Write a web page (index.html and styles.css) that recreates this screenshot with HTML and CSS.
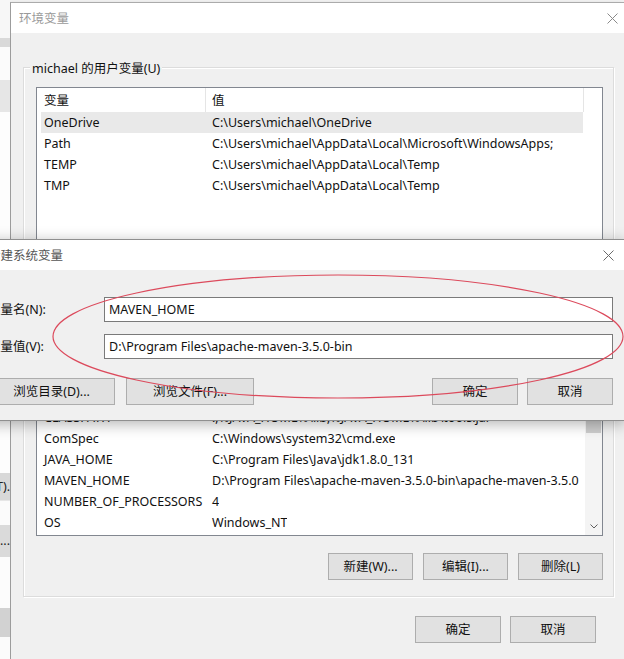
FILE: index.html
```html
<!DOCTYPE html>
<html lang="zh-CN">
<head>
<meta charset="utf-8">
<title>环境变量</title>
<link rel="stylesheet" href="styles.css">
</head>
<body>
<div class="desk">
  <div class="bgwin">
    <div class="band b1"></div>
    <div class="band b2"></div>
    <div class="band b3"></div>
    <div class="band b4"></div>
    <div class="band b5"></div>
    <div class="band b6"><span>(T).</span></div>
    <div class="band b7"></div>
    <div class="band b8"><span>...</span></div>
    <div class="band b9"></div>
    <div class="band b10"></div>
    <div class="band b11"></div>
  </div>

  <div class="dlg main">
    <div class="titlebar">
      <span class="ttl inactive">环境变量</span>
      <svg class="xbtn" width="11" height="11" viewBox="0 0 11 11"><path d="M0.5 0.5L10.5 10.5M10.5 0.5L0.5 10.5" stroke="#8a8a8a" stroke-width="1" fill="none"/></svg>
    </div>
    <div class="body">
      <div class="group">
        <div class="glabel">michael 的用户变量(U)</div>
        <div class="list l1">
          <div class="lcontent">
            <div class="lhead"><div class="hc1">变量</div><div class="hc2">值</div></div>
            <div class="row sel"><div class="rc1">OneDrive</div><div class="rc2">C:\Users\michael\OneDrive</div></div>
            <div class="row"><div class="rc1">Path</div><div class="rc2">C:\Users\michael\AppData\Local\Microsoft\WindowsApps;</div></div>
            <div class="row"><div class="rc1">TEMP</div><div class="rc2">C:\Users\michael\AppData\Local\Temp</div></div>
            <div class="row"><div class="rc1">TMP</div><div class="rc2">C:\Users\michael\AppData\Local\Temp</div></div>
          </div>
        </div>
        <div class="gbtns">
          <button class="btn">新建(N)...</button>
          <button class="btn">编辑(E)...</button>
          <button class="btn">删除(D)</button>
        </div>
      </div>

      <div class="group g2">
        <div class="glabel">系统变量(S)</div>
        <div class="list l2">
          <div class="lcontent">
            <div class="lhead"><div class="hc1">变量</div><div class="hc2">值</div></div>
            <div class="row"><div class="rc1">asl.log</div><div class="rc2">Destination=file</div></div>
            <div class="row"><div class="rc1">CLASSPATH</div><div class="rc2">.;%JAVA_HOME%\lib;%JAVA_HOME%\lib\tools.jar</div></div>
            <div class="row"><div class="rc1">CLASSPATH</div><div class="rc2">.;%JAVA_HOME%\lib;%JAVA_HOME%\lib\tools.jar</div></div>
            <div class="row"><div class="rc1">ComSpec</div><div class="rc2">C:\Windows\system32\cmd.exe</div></div>
            <div class="row"><div class="rc1">JAVA_HOME</div><div class="rc2">C:\Program Files\Java\jdk1.8.0_131</div></div>
            <div class="row"><div class="rc1">MAVEN_HOME</div><div class="rc2">D:\Program Files\apache-maven-3.5.0-bin\apache-maven-3.5.0</div></div>
            <div class="row"><div class="rc1">NUMBER_OF_PROCESSORS</div><div class="rc2">4</div></div>
            <div class="row"><div class="rc1">OS</div><div class="rc2">Windows_NT</div></div>
          </div>
          <div class="sb">
            <div class="sbarrow"></div>
            <div class="sbthumb"></div>
            <div class="sbtrack"></div>
            <div class="sbarrow down"><svg width="8" height="5" viewBox="0 0 8 5"><path d="M0.5 0.5L4 4L7.5 0.5" stroke="#606060" stroke-width="1" fill="none"/></svg></div>
          </div>
        </div>
        <div class="gbtns">
          <button class="btn">新建(W)...</button>
          <button class="btn">编辑(I)...</button>
          <button class="btn">删除(L)</button>
        </div>
      </div>

      <div class="footer">
        <button class="btn wide">确定</button>
        <button class="btn wide">取消</button>
      </div>
    </div>
  </div>
</div>

<div class="dlg ov">
  <div class="titlebar">
    <span class="ttl">新建系统变量</span>
    <svg class="xbtn" width="11" height="11" viewBox="0 0 11 11"><path d="M0.5 0.5L10.5 10.5M10.5 0.5L0.5 10.5" stroke="#6a6a6a" stroke-width="1" fill="none"/></svg>
  </div>
  <div class="ov-body">
    <div class="field"><label class="flabel">变量名(N):</label><div class="input">MAVEN_HOME</div></div>
    <div class="field f2"><label class="flabel">变量值(V):</label><div class="input">D:\Program Files\apache-maven-3.5.0-bin</div></div>
    <div class="ov-btns">
      <button class="btn browse1">浏览目录(D)...</button>
      <button class="btn browse2">浏览文件(F)...</button>
      <div class="ov-right">
        <button class="btn wide">确定</button>
        <button class="btn wide">取消</button>
      </div>
    </div>
  </div>
</div>

<svg class="mark" width="624" height="659" viewBox="0 0 624 659">
  <ellipse cx="338" cy="336.5" rx="285" ry="61.5" fill="none" stroke="#dc4a5c" stroke-width="1.2"/>
</svg>
</body>
</html>
```

FILE: styles.css
```css
* { box-sizing: border-box; }
html, body { margin: 0; padding: 0; }
body {
  width: 624px;
  height: 659px;
  overflow: hidden;
  position: relative;
  background: #f3f3f3;
  font-family: "Noto Sans", "Noto Sans CJK SC", sans-serif;
  font-size: 12.5px;
  color: #111;
}

.desk { display: flex; height: 659px; }

/* background window strip */
.bgwin { width: 10px; flex: none; display: flex; flex-direction: column; overflow: hidden; }
.band { flex: none; position: relative; overflow: hidden; white-space: nowrap; }
.band span { position: absolute; right: 0; line-height: 27px; color: #222; }
.b1 { height: 38px; background: #f7f7f7; }
.b2 { height: 9px; background: #d9d9d9; }
.b3 { height: 33px; background: #fbfbfb; }
.b4 { height: 32px; background: #e6e6e6; }
.b5 { height: 361px; background: #fdfdfd; }
.b6 { height: 27px; background: #d8d8d8; }
.b7 { height: 25px; background: #fbfbfb; border-top: 1px solid #e6e6e6; }
.b8 { height: 32px; background: #dadada; }
.b8 span { line-height: 32px; }
.b9 { height: 51px; background: #fcfcfc; }
.b10 { height: 29px; background: #d2d2d2; }
.b11 { height: 22px; background: #fbfbfb; }

/* dialogs */
.dlg { background: #f0f0f0; display: flex; flex-direction: column; }
.main {
  flex: none;
  width: 614px;
  height: 657px;
  margin-top: 2px;
  border-left: 1px solid #9c9c9c;
  border-top: 1px solid #ababab;
  box-shadow: -2px 0 4px rgba(0,0,0,0.08);
}
.titlebar {
  height: 30px;
  flex: none;
  background: #fff;
  display: flex;
  align-items: center;
  justify-content: space-between;
}
.main .titlebar { padding: 0 6px 0 8px; }
.ttl { line-height: 16px; padding-top: 1px; color: #555; }
.ttl.inactive { color: #9a9a9a; }
.xbtn { display: block; }

.body { padding: 34px 10px 0 12px; }

.group {
  border: 1px solid #dcdcdc;
  box-shadow: inset 1px 1px 0 #fff, 1px 1px 0 #fff;
  padding: 0 10px 16px 12px;
}
.g2 { margin-top: 11px; }
.glabel {
  margin: -7px 0 0 -6px;
  padding: 0 2px;
  width: fit-content;
  background: #f0f0f0;
  line-height: 16px;
  color: #111;
}

.list {
  margin-top: 10px;
  border: 1px solid #828790;
  background: #fff;
  display: flex;
  overflow: hidden;
}
.l1 { height: 160px; }
.l2 { height: 196px; }
.lcontent { width: 547px; flex: none; }
.lhead { display: flex; height: 24px; line-height: 22px; }
.hc1 { width: 169px; padding: 2px 0 0 7px; border-right: 1px solid #e5e5e5; }
.hc2 { width: 378px; padding: 2px 0 0 6px; border-right: 1px solid #e5e5e5; }
.row { display: flex; height: 21px; padding-top: 1px; line-height: 20px; width: 542px; margin-left: 4px; white-space: nowrap; }
.row.sel { background: #e9e9e9; }
.rc1 { width: 164px; padding-left: 3px; flex: none; overflow: hidden; }
.rc2 { padding-left: 7px; overflow: hidden; }

.sb { margin-left: auto; width: 17px; display: flex; flex-direction: column; background: #f4f4f4; }
.sbarrow { height: 17px; flex: none; display: flex; align-items: center; justify-content: center; }
.sbthumb { height: 75px; flex: none; background: #cdcdcd; margin: 0 1px; }
.sbtrack { flex: 1; }

.btn {
  font: inherit;
  color: #111;
  background: #e1e1e1;
  border: 1px solid #adadad;
  height: 27px;
  width: 85px;
  padding: 1px 0 0;
  line-height: 24px;
  text-align: center;
  flex: none;
}
.btn.wide { width: 86px; }

.gbtns { display: flex; justify-content: flex-end; gap: 10px; margin-top: 17px; }
.group:first-child .gbtns { margin-top: 18px; }

.footer { display: flex; justify-content: flex-end; gap: 9px; padding: 19px 18px 0 0; }

/* overlay dialog */
.ov {
  position: absolute;
  left: -25px;
  top: 239px;
  width: 650px;
  border: 1px solid #8f8f8f;
  box-shadow: 0 3px 14px rgba(0,0,0,0.3);
}
.ov .titlebar { padding: 0 10px 0 12px; }
.ov-body { padding: 27px 11px 15px 12px; }
.field { display: flex; align-items: center; }
.f2 { margin-top: 12px; }
.flabel { width: 116px; flex: none; line-height: 16px; color: #111; }
.input {
  flex: 1;
  height: 25px;
  border: 1px solid #7a7a7a;
  background: #fff;
  padding: 0 4px;
  line-height: 23px;
  color: #111;
  white-space: nowrap;
}
.ov-btns { display: flex; margin-top: 19px; }
.browse1 { width: 127px; }
.browse2 { width: 128px; margin-left: 11px; }
.ov-right { margin-left: auto; display: flex; gap: 9px; }

.mark { position: absolute; left: 0; top: 0; pointer-events: none; }
```
